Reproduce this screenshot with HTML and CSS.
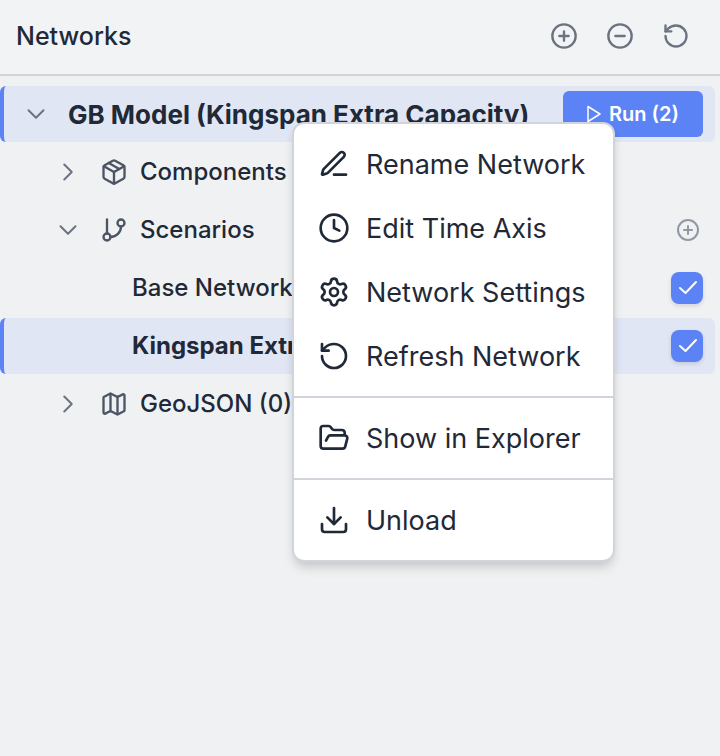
FILE: index.html
```html
<!DOCTYPE html>
<html lang="en">
<head>
<meta charset="utf-8">
<title>Networks</title>
<link rel="stylesheet" href="styles.css">
</head>
<body>
<svg class="sprite" aria-hidden="true">
  <symbol id="plus" viewBox="0 0 24 24"><circle cx="12" cy="12" r="10"/><path d="M8 12h8M12 8v8"/></symbol>
  <symbol id="minus" viewBox="0 0 24 24"><circle cx="12" cy="12" r="10"/><path d="M8 12h8"/></symbol>
  <symbol id="rotate" viewBox="0 0 24 24"><path d="M3 12a9 9 0 1 0 9-9 9.75 9.75 0 0 0-6.74 2.74L3 8"/><path d="M3 3v5h5"/></symbol>
  <symbol id="down" viewBox="0 0 24 24"><path d="m19.5 8.25-7.5 7.5-7.5-7.5"/></symbol>
  <symbol id="right" viewBox="0 0 24 24"><path d="m8.25 4.5 7.5 7.5-7.5 7.5"/></symbol>
  <symbol id="check" viewBox="0 0 24 24"><path d="M5 12 10.5 17 21 6"/></symbol>
</svg>
<header class="header">
  <h1 class="title">Networks</h1>
  <div class="actions">
    <button class="icon-button" aria-label="Add network"><svg class="icon"><use href="#plus"/></svg></button>
    <button class="icon-button" aria-label="Remove network"><svg class="icon"><use href="#minus"/></svg></button>
    <button class="icon-button" aria-label="Refresh"><svg class="icon"><use href="#rotate"/></svg></button>
  </div>
</header>
<main class="tree">
  <div class="row row-root selected">
    <button class="toggle" aria-label="Collapse model"><svg class="chevron"><use href="#down"/></svg></button>
    <span class="label model">GB Model (Kingspan Extra Capacity)</span>
    <button class="run"><svg class="play" viewBox="0 0 14 18"><path d="M1 1.5v15L13 9z"/></svg>Run (2)</button>
  </div>
  <div class="row row-child">
    <button class="toggle" aria-label="Expand components"><svg class="chevron"><use href="#right"/></svg></button>
    <svg class="icon kind" viewBox="0 0 24 24"><path d="M11 21.73a2 2 0 0 0 2 0l7-4A2 2 0 0 0 21 16V8a2 2 0 0 0-1-1.73l-7-4a2 2 0 0 0-2 0l-7 4A2 2 0 0 0 3 8v8a2 2 0 0 0 1 1.73z"/><path d="M12 22V12"/><path d="M3.29 7 12 12l8.71-5"/><path d="m7.5 4.27 9 5.15"/></svg>
    <span class="label">Components</span>
  </div>
  <div class="row row-child">
    <button class="toggle" aria-label="Collapse scenarios"><svg class="chevron"><use href="#down"/></svg></button>
    <svg class="icon kind" viewBox="0 0 24 24"><path d="M6 3v12"/><circle cx="18" cy="6" r="3"/><circle cx="6" cy="18" r="3"/><path d="M18 9a9 9 0 0 1-9 9"/></svg>
    <span class="label">Scenarios</span>
    <button class="add" aria-label="Add scenario"><svg class="icon small"><use href="#plus"/></svg></button>
  </div>
  <div class="row row-leaf">
    <label class="label" for="base">Base Network</label>
    <span class="tick"><input type="checkbox" id="base" checked><svg class="mark"><use href="#check"/></svg></span>
  </div>
  <div class="row row-leaf selected">
    <label class="label" for="kingspan">Kingspan Extra Capacity</label>
    <span class="tick"><input type="checkbox" id="kingspan" checked><svg class="mark"><use href="#check"/></svg></span>
  </div>
  <div class="row row-child">
    <button class="toggle" aria-label="Expand GeoJSON"><svg class="chevron"><use href="#right"/></svg></button>
    <svg class="icon kind" viewBox="0 0 24 24"><path d="M14.106 5.553a2 2 0 0 0 1.788 0l3.659-1.83A1 1 0 0 1 21 4.619v12.764a1 1 0 0 1-.553.894l-4.553 2.277a2 2 0 0 1-1.788 0l-4.212-2.106a2 2 0 0 0-1.788 0l-3.659 1.83A1 1 0 0 1 3 19.381V6.618a1 1 0 0 1 .553-.894l4.553-2.277a2 2 0 0 1 1.788 0z"/><path d="M15 5.764v15M9 3.236v15"/></svg>
    <span class="label">GeoJSON (0)</span>
  </div>
</main>
<div class="menu" role="menu">
  <div class="group">
    <button class="item" role="menuitem"><svg class="icon" viewBox="0 0 24 24"><path d="M12 20h9"/><path d="M16.376 3.622a1 1 0 0 1 3.002 3.002L7.368 18.635a2 2 0 0 1-.855.506l-2.872.838a.5.5 0 0 1-.62-.62l.838-2.872a2 2 0 0 1 .506-.854z"/></svg>Rename Network</button>
    <button class="item" role="menuitem"><svg class="icon" viewBox="0 0 24 24"><circle cx="12" cy="12" r="10"/><path d="M12 6v6l4 2"/></svg>Edit Time Axis</button>
    <button class="item" role="menuitem"><svg class="icon" viewBox="0 0 24 24"><path d="M9.671 4.136a2.34 2.34 0 0 1 4.659 0 2.34 2.34 0 0 0 3.319 1.915 2.34 2.34 0 0 1 2.33 4.033 2.34 2.34 0 0 0 0 3.831 2.34 2.34 0 0 1-2.33 4.033 2.34 2.34 0 0 0-3.319 1.915 2.34 2.34 0 0 1-4.659 0 2.34 2.34 0 0 0-3.32-1.915 2.34 2.34 0 0 1-2.33-4.033 2.34 2.34 0 0 0 0-3.831A2.34 2.34 0 0 1 6.35 6.051a2.34 2.34 0 0 0 3.319-1.915"/><circle cx="12" cy="12" r="3"/></svg>Network Settings</button>
    <button class="item" role="menuitem"><svg class="icon"><use href="#rotate"/></svg>Refresh Network</button>
  </div>
  <div class="group">
    <button class="item" role="menuitem"><svg class="icon" viewBox="0 0 24 24"><path d="m6 14 1.5-2.9A2 2 0 0 1 9.24 10H20a2 2 0 0 1 1.94 2.5l-1.54 6a2 2 0 0 1-1.95 1.5H4a2 2 0 0 1-2-2V5a2 2 0 0 1 2-2h3.9a2 2 0 0 1 1.69.9l.81 1.2a2 2 0 0 0 1.67.9H18a2 2 0 0 1 2 2v2"/></svg>Show in Explorer</button>
  </div>
  <div class="group">
    <button class="item" role="menuitem"><svg class="icon" viewBox="0 0 24 24"><path d="M12 15V3"/><path d="M21 15v4a2 2 0 0 1-2 2H5a2 2 0 0 1-2-2v-4"/><path d="m7 10 5 5 5-5"/></svg>Unload</button>
  </div>
</div>
</body>
</html>
```
FILE: styles.css
```css
* { box-sizing: border-box; }
body {
  margin: 0;
  min-height: 100vh;
  background: #f0f1f3;
  color: #1f2937;
  font-family: Inter, "Liberation Sans", sans-serif;
  font-size: 24px;
  font-weight: 500;
}
button {
  margin: 0;
  padding: 0;
  border: 0;
  background: none;
  color: inherit;
  font: inherit;
}
.sprite { position: absolute; width: 0; height: 0; }
.icon, .chevron, .play, .mark {
  display: block;
  flex: none;
  width: 28px;
  height: 28px;
  fill: none;
  stroke: currentColor;
  stroke-width: 2;
  stroke-linecap: round;
  stroke-linejoin: round;
}
.header {
  display: flex;
  align-items: center;
  justify-content: space-between;
  height: 76px;
  padding: 0 22px 2px 16px;
  border-bottom: 2px solid #d1d5db;
  background: #f1f3f5;
}
.title { margin: 0; font-size: 25px; font-weight: 500; }
.actions { display: flex; gap: 12px; color: #6b7280; }
.icon-button { display: grid; place-items: center; width: 44px; height: 44px; }
.tree {
  display: flex;
  flex-direction: column;
  gap: 2px;
  padding: 10px 5px 10px 0;
}
.row {
  display: flex;
  align-items: center;
  height: 56px;
  padding-right: 12px;
  border-left: 4px solid transparent;
  border-radius: 6px;
}
.row-root { padding-left: 20px; }
.row-child { padding-left: 52px; }
.row-leaf { padding-left: 128px; }
.selected { background: #e1e6f4; border-left-color: #5b83f6; font-weight: 700; }
.toggle { color: #6b7280; }
.chevron { width: 24px; height: 24px; stroke-width: 2; }
.kind { margin: 0 12px 0 20px; color: #4b5563; }
.label { flex: 1; min-width: 0; padding-bottom: 2px; white-space: nowrap; }
.model { padding: 0 0 0 20px; font-size: 26px; }
.run {
  display: flex;
  align-items: center;
  justify-content: center;
  gap: 8px;
  width: 140px;
  height: 46px;
  border-radius: 6px;
  background: #5b83f6;
  color: #fff;
  font-size: 20px;
  font-weight: 600;
}
.play { width: 14px; height: 18px; stroke-width: 1.5; }
.add { padding-right: 3px; color: #9298a4; }
.small { width: 24px; height: 24px; }
.tick { display: grid; }
.tick input, .tick .mark { grid-area: 1 / 1; }
.tick input {
  appearance: none;
  width: 32px;
  height: 32px;
  margin: 0;
  border-radius: 8px;
  background: #5b83f6;
  box-shadow: 0 2px 4px rgb(0 0 0 / 12%);
}
.tick .mark {
  place-self: center;
  width: 24px;
  height: 24px;
  color: #fff;
  pointer-events: none;
}
.menu {
  position: absolute;
  top: 122px;
  left: 292px;
  min-width: 323px;
  border: 2px solid #d1d5db;
  border-radius: 12px;
  background: #fff;
  box-shadow: 0 8px 12px -2px rgb(0 0 0 / 12%), 0 4px 8px -2px rgb(0 0 0 / 8%);
  font-size: 27px;
  font-weight: 400;
}
.group { padding: 8px 0; }
.group + .group { border-top: 2px solid #d1d5db; }
.item {
  display: flex;
  align-items: center;
  gap: 16px;
  width: 100%;
  height: 64px;
  padding: 0 24px;
  white-space: nowrap;
}
.item .icon { width: 32px; height: 32px; }
```
